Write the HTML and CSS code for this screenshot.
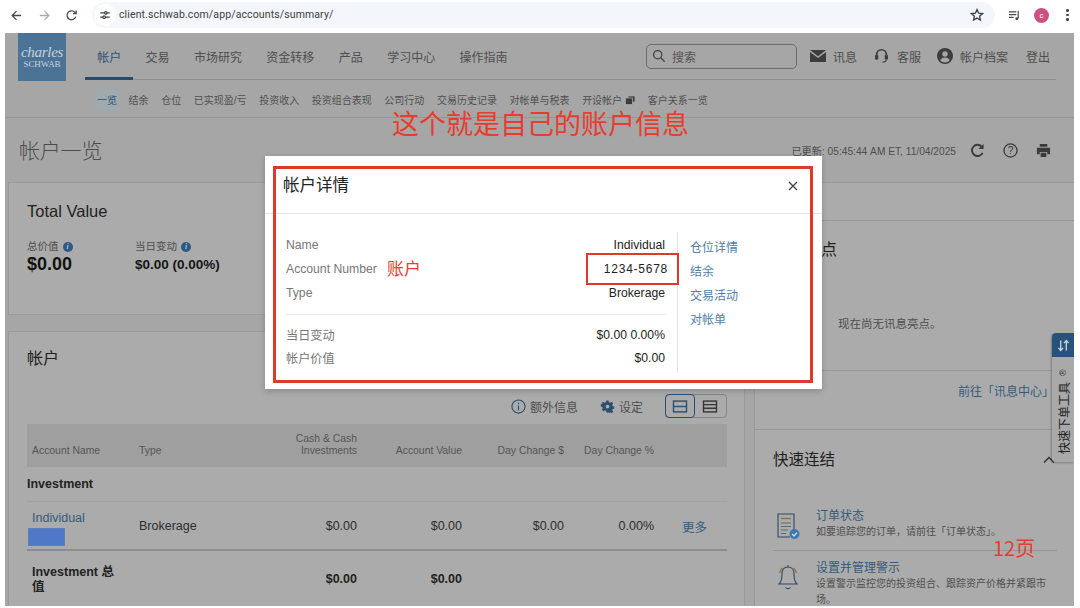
FILE: index.html
```html
<!DOCTYPE html>
<html lang="zh-CN">
<head>
<meta charset="utf-8">
<title>帐户一览</title>
<link rel="stylesheet" href="styles.css">
</head>
<body>
<div class="screen">
  <header class="chrome">
    <svg class="cicon back" viewBox="0 0 14 14"><path d="M12 7H2.5M7 2.3 2.3 7 7 11.7"/></svg>
    <svg class="cicon fwd" viewBox="0 0 14 14"><path d="M2 7h9.5M7 2.3 11.7 7 7 11.7"/></svg>
    <svg class="cicon reload" viewBox="0 0 14 14"><path d="M11.6 8.2A4.8 4.8 0 1 1 10.6 3.6L12 5M12 1.6V5H8.6"/></svg>
    <div class="urlbar">
      <span class="tune"><svg viewBox="0 0 14 14"><path d="M1.5 4.5h5M9.5 4.5h3M1.5 9.5h3M7.5 9.5h5"/><circle cx="8" cy="4.5" r="1.5"/><circle cx="6" cy="9.5" r="1.5"/></svg></span>
      <span class="url">client.schwab.com/app/accounts/summary/</span>
      <svg class="star" viewBox="0 0 14 14"><path d="M7 1.6 8.6 5.2l3.9.4-2.9 2.6.8 3.8L7 10.1 3.6 12l.8-3.8L1.5 5.600l3.900-.4z"/></svg>
    </div>
    <svg class="media" viewBox="0 0 14 14"><path d="M1 3h8M1 6h8M1 9h5"/><path d="M11 2v8"/><circle cx="9.500" cy="10.500" r="1.600" class="fill"/></svg>
    <span class="avatar">c</span>
    <span class="dots"><i></i><i></i><i></i></span>
  </header>

  <div class="app">
    <div class="topnav">
      <div class="logo"><em>charles</em><span>SCHWAB</span></div>
      <div class="navcol">
        <div class="navrow">
          <nav class="tabs">
            <a class="tab active">帐户</a><a class="tab">交易</a><a class="tab">市场研究</a><a class="tab">资金转移</a><a class="tab">产品</a><a class="tab">学习中心</a><a class="tab">操作指南</a>
          </nav>
          <div class="search">
            <svg viewBox="0 0 16 16"><circle cx="6.500" cy="6.500" r="4.700"/><path d="m10 10 4.500 4.500"/></svg>
            <span>搜索</span>
          </div>
          <div class="util">
            <svg class="i-mail" viewBox="0 0 16 12"><path class="fill" d="M0 0h16L8 6.200zM0 2l8 6 8-6v10H0z"/></svg><span>讯息</span>
          </div>
          <div class="util">
            <svg class="i-head" viewBox="0 0 14 16"><path d="M1.800 9V6.500a5.200 5.200 0 0 1 10.400 0V9" class="line"/><rect class="fill" x="0" y="7" width="3.500" height="5" rx="1.200"/><rect class="fill" x="10.500" y="7" width="3.500" height="5" rx="1.200"/><path class="line thin" d="M12 12c0 2-1.500 2.500-4 2.500"/></svg><span>客服</span>
          </div>
          <div class="util">
            <svg class="i-user" viewBox="0 0 16 16"><circle class="fill" cx="8" cy="8" r="8"/><circle class="cut" cx="8" cy="6" r="2.700"/><path class="cut" d="M3.200 12.200c1-2 3-2.700 4.800-2.700s3.800.7 4.800 2.700a6.300 6.300 0 0 1-9.600 0z"/></svg><span>帐户档案</span>
          </div>
          <a class="logout">登出</a>
        </div>
      </div>
    </div>
    <nav class="subnav">
      <a class="sub current">一览</a><a class="sub">结余</a><a class="sub">仓位</a><a class="sub">已实现盈/亏</a><a class="sub">投资收入</a><a class="sub">投资组合表现</a><a class="sub">公司行动</a><a class="sub">交易历史记录</a><a class="sub">对帐单与税表</a>
      <a class="sub open">开设帐户<svg viewBox="0 0 10 10"><rect x="3" y="1" width="7" height="6"/><rect x="0.500" y="3" width="7" height="6.500"/></svg></a>
      <a class="sub">客户关系一览</a>
    </nav>

    <div class="titlerow">
      <h1>帐户一览</h1>
      <span class="updated">已更新: 05:45:44 AM ET, 11/04/2025</span>
      <svg class="act" viewBox="0 0 16 16"><path class="stroke" d="M13.500 10.500A6 6 0 1 1 12.500 3.800"/><path class="fill" d="M14.500 1v5.500H9z"/></svg>
      <svg class="act" viewBox="0 0 16 16"><circle class="stroke thin" cx="8" cy="8" r="7"/><text x="8" y="11.800" text-anchor="middle" class="q">?</text></svg>
      <svg class="act" viewBox="0 0 16 16"><path class="fill" d="M4 1h8v3H4zM1 5h14v7h-3v-2.500H4V12H1zM5 10.500h6V15H5z"/></svg>
    </div>

    <div class="content">
      <main class="leftcol">
        <section class="card total">
          <h2 class="en">Total Value</h2>
          <div class="stats">
            <div class="stat first">
              <div class="lab">总价值<i class="info">i</i></div>
              <div class="big">$0.00</div>
            </div>
            <div class="stat">
              <div class="lab">当日变动<i class="info">i</i></div>
              <div class="mid">$0.00 (0.00%)</div>
            </div>
          </div>
        </section>
        <section class="card accounts">
          <h2>帐户</h2>
          <div class="tools">
            <span class="tool"><svg viewBox="0 0 16 16"><circle cx="8" cy="8" r="7"/><path d="M8 7v5M8 4v1.500"/></svg>额外信息</span>
            <span class="tool"><svg viewBox="0 0 16 16"><path class="gear" d="M6.500 0h3l.4 2.300 1.700.7 2-1.300 2 2.200-1.300 1.900.7 1.700 2 .4v3l-2 .4-.7 1.700 1.300 1.900-2 2.200-2-1.300-1.700.7L9.500 16h-3l-.4-2.300-1.700-.7-2 1.300-2-2.200 1.300-1.900-.7-1.700-2-.4v-3l2-.4.7-1.700L-.1 3.900l2-2.200 2 1.300 1.700-.7zM8 5.500a2.500 2.500 0 1 0 0 5 2.500 2.500 0 0 0 0-5z" transform="translate(1.600 1.600) scale(.8)"/></svg>设定</span>
            <div class="toggle">
              <span class="tg on"><svg viewBox="0 0 14 12"><rect x="1" y="1" width="12" height="10"/><path d="M1 6h12"/></svg></span>
              <span class="tg"><svg viewBox="0 0 14 12"><rect x="1" y="1" width="12" height="10"/><path d="M1 4.300h12M1 7.600h12"/></svg></span>
            </div>
          </div>
          <table class="grid">
            <colgroup><col class="c1"><col class="c2"><col class="c3"><col class="c4"><col class="c5"><col class="c6"><col class="c7"></colgroup>
            <thead>
              <tr><th>Account Name</th><th>Type</th><th class="r">Cash &amp; Cash<br>Investments</th><th class="r">Account Value</th><th class="r">Day Change $</th><th class="r">Day Change %</th><th></th></tr>
            </thead>
            <tbody>
              <tr class="group"><td colspan="7">Investment</td></tr>
              <tr class="acct">
                <td><a class="lnk">Individual</a><span class="redact"></span></td>
                <td>Brokerage</td><td class="r">$0.00</td><td class="r">$0.00</td><td class="r">$0.00</td><td class="r">0.00%</td><td><a class="lnk more">更多</a></td>
              </tr>
              <tr class="sum">
                <td>Investment 总值</td><td></td><td class="r">$0.00</td><td class="r">$0.00</td><td></td><td></td><td></td>
              </tr>
            </tbody>
          </table>
        </section>
      </main>
      <aside class="rightcol">
        <div class="stub"></div>
        <section class="news">
          <h2>讯息亮点</h2>
          <p class="empty">现在尚无讯息亮点。</p>
          <div class="gotolink"><a class="lnk">前往「讯息中心」</a></div>
        </section>
        <section class="quick">
          <div class="qhead"><h2>快速连结</h2><svg viewBox="0 0 12 8"><path d="M1 6.500 6 1.500l5 5"/></svg></div>
          <div class="qitem">
            <svg class="qi" viewBox="0 0 24 28"><path class="b" d="M18 18V2H2v23h12"/><path class="o" d="M5 6.500h10"/><path class="g" d="M5 11h10M5 14.500h10M5 18h7M5 21.500h5"/><circle class="blue" cx="18.500" cy="22" r="5"/><path class="w" d="m16 22 2 2 3-3.500"/></svg>
            <div class="qtext"><a class="lnk">订单状态</a><p>如要追踪您的订单，请前往「订单状态」。</p></div>
          </div>
          <div class="qitem second">
            <svg class="qi" viewBox="0 0 24 28"><path class="b" d="M12 3c-4 0-6 3-6 7 0 5-1 8-3 10h18c-2-2-3-5-3-10 0-4-2-7-6-7zM9.500 23.500c1 1.500 4 1.500 5 0M12 1v2"/><path class="o" d="M3.500 9c.5-2 1.500-3.500 3-5M20.500 9c-.5-2-1.500-3.500-3-5"/></svg>
            <div class="qtext"><a class="lnk">设置并管理警示</a><p>设置警示监控您的投资组合、跟踪资产价格并紧跟市场。</p></div>
          </div>
        </section>
      </aside>
    </div>

    <div class="ticket">
      <div class="thead"><svg viewBox="0 0 14 14"><path d="M4 1.500V12M1.500 9.500 4 12.500l2.500-3M10 12.500V2M7.500 4.500 10 1.500l2.500 3"/></svg></div>
      <div class="tbody"><span>快速下单工具</span><i>®</i></div>
    </div>

    <div class="modal">
      <div class="mhead"><h3>帐户详情</h3><svg viewBox="0 0 10 10"><path d="m1 1 8 8M9 1l-8 8"/></svg></div>
      <div class="mbody">
        <div class="minfo">
          <div class="mrow"><span>Name</span><b>Individual</b></div>
          <div class="mrow"><span>Account Number</span><b class="num">1234-5678</b></div>
          <div class="mrow"><span>Type</span><b>Brokerage</b></div>
          <div class="mrule"></div>
          <div class="mrow"><span>当日变动</span><b>$0.00 0.00%</b></div>
          <div class="mrow"><span>帐户价值</span><b>$0.00</b></div>
        </div>
        <div class="mlinks"><a>仓位详情</a><a>结余</a><a>交易活动</a><a>对帐单</a></div>
      </div>
    </div>
  </div>

  <div class="note note-title">这个就是自己的账户信息</div>
  <div class="frame frame-modal"></div>
  <div class="frame frame-num"></div>
  <div class="note note-acct">账户</div>
  <div class="note note-page">12页</div>
</div>
</body>
</html>
```
FILE: styles.css
```css
* { box-sizing: border-box; }
html, body { margin: 0; padding: 0; }
body { width: 1080px; height: 608px; overflow: hidden; background: #fff; font-family: "Liberation Sans", "Noto Sans CJK SC", sans-serif; color: #1c1c1c; }
a { text-decoration: none; }
h1, h2, h3, p { margin: 0; font-weight: 400; }
.screen { position: relative; width: 1080px; height: 608px; overflow: hidden; }

/* browser bar */
.chrome { height: 33px; display: flex; align-items: center; padding: 0 0 3px 10px; background: #fff; }
.cicon { width: 13px; height: 13px; fill: none; stroke: #474a4f; stroke-width: 1.4; }
.back { margin-right: 15px; }
.fwd { margin-right: 14px; stroke: #a8abb0; }
.reload { margin-right: 14px; }
.urlbar { width: 903px; height: 26px; border-radius: 13px; background: #f3f6fb; display: flex; align-items: center; padding-left: 2px; }
.tune { width: 22px; height: 22px; border-radius: 50%; background: #fff; display: flex; align-items: center; justify-content: center; }
.tune svg { width: 12px; height: 12px; fill: none; stroke: #3c4043; stroke-width: 1.3; }
.url { margin-left: 3px; font: 10.500px/1 "Roboto", "Liberation Sans", sans-serif; color: #3a3d41; letter-spacing: .12px; }
.star { width: 14px; height: 14px; margin-left: auto; margin-right: 11px; fill: none; stroke: #3c4043; stroke-width: 1.300; }
.media { width: 13px; height: 13px; margin-left: 13px; fill: none; stroke: #44474b; stroke-width: 1.300; }
.media .fill { fill: #44474b; stroke: none; }
.avatar { width: 15px; height: 15px; border-radius: 50%; margin-left: 13px; background: #cb5280; color: #fff; font-size: 8px; line-height: 15px; text-align: center; }
.dots { margin-left: 17px; display: flex; flex-direction: column; gap: 2px; }
.dots i { width: 2.500px; height: 2.500px; border-radius: 50%; background: #44474b; }

/* app */
.app { position: relative; margin: 0 6px 2px 5px; height: 573px; background: #a6a6a6; overflow: hidden; color: #202020; }
.topnav { display: flex; height: 47px; padding-left: 13px; }
.logo { width: 48px; height: 48px; background: #4a7396; display: flex; flex-direction: column; align-items: center; justify-content: center; color: #c8d2da; font-family: "Liberation Serif", serif; padding-top: 1px; }
.logo em { font-size: 15px; line-height: 13px; letter-spacing: -.3px; }
.logo span { font-size: 9px; line-height: 10px; letter-spacing: -.1px; }
.navcol { margin-left: 19px; width: 971px; border-bottom: 1px solid #8e8e8e; }
.navrow { height: 46px; display: flex; align-items: center; }
.tabs { display: flex; height: 46px; width: 561px; }
.tab { padding: 0 12.200px; font-size: 12px; line-height: 50px; color: #4e4e4e; position: relative; }
.tab.active { color: #2c5273; }
.tab.active::after { content: ""; position: absolute; left: 0; right: 0; bottom: -1px; height: 3px; background: #274b6b; }
.search { width: 151px; height: 25px; border: 1px solid #6d6d6d; border-radius: 5px; display: flex; align-items: center; padding-left: 5px; font-size: 12px; color: #555; }
.search svg { width: 14px; height: 14px; fill: none; stroke: #444; stroke-width: 1.500; margin-right: 6px; }
.util { display: flex; align-items: center; font-size: 12px; color: #4e4e4e; margin-left: 13px; }
.util svg { margin-right: 7px; }
.util .fill { fill: #3d3d3d; }
.util .cut { fill: #a6a6a6; }
.util .line { fill: none; stroke: #3d3d3d; stroke-width: 1.800; }
.util .thin { stroke-width: 1.200; }
.i-mail { width: 16px; height: 12px; }
.i-head { width: 13px; height: 16px; margin-left: 5px; margin-right: 9px !important; }
.i-user { width: 16px; height: 16px; margin-left: 3px; }
.logout { margin-left: 18px; font-size: 12px; color: #4e4e4e; }

.subnav { height: 38px; display: flex; align-items: center; gap: 12.600px; padding: 2px 0 0 92px; border-bottom: 1px solid #959595; font-size: 10px; color: #505050; }
.sub { white-space: nowrap; }
.current { background: #9fa9ae; color: #2c5273; margin: 0 -3px 0 -2px; padding: 3px 2px; }
.open { display: flex; align-items: center; }
.open svg { width: 10px; height: 10px; margin-left: 3px; fill: #3b3b3b; stroke: #a6a6a6; stroke-width: .8; }

.titlerow { height: 64px; display: flex; align-items: center; padding: 0 23px 0 14px; }
.titlerow h1 { font-size: 21px; color: #4c4c4c; font-weight: 300; margin: 0 auto 2px 0; letter-spacing: -.2px; }
.updated { font-size: 10.200px; color: #4f4f4f; }
.act { width: 15px; height: 15px; margin-left: 18px; }
.updated + .act { margin-left: 14px; }
.act .stroke { fill: none; stroke: #3b3b3b; stroke-width: 2; }
.act .thin { stroke-width: 1.400; }
.act .fill { fill: #3b3b3b; }
.q { font-size: 11px; fill: #3b3b3b; font-family: "Liberation Sans", sans-serif; }

.content { display: flex; padding-left: 3px; height: 424px; }
.leftcol { width: 737px; display: flex; flex-direction: column; gap: 16px; flex: none; }
.card { background: #ababab; border: 1px solid #9b9b9b; padding-left: 18px; }
.total { height: 133px; padding-top: 18px; }
.card h2 { font-size: 16.500px; line-height: 20px; color: #1f1f1f; }
.stats { display: flex; margin-top: 19px; }
.stat.first { width: 108px; }
.lab { font-size: 10.500px; line-height: 13px; color: #4e4e4e; display: flex; align-items: center; }
.info { width: 10px; height: 10px; border-radius: 50%; background: #2d5a82; color: #b5c3cf; font: italic 700 7.500px/10px "Liberation Serif", serif; text-align: center; margin-left: 4px; }
.big { font-size: 18px; line-height: 21px; font-weight: 700; color: #111; margin-top: 1px; }
.mid { font-size: 13.500px; line-height: 21px; font-weight: 700; color: #161616; margin-top: 1px; }

.accounts { flex: 1; padding-top: 17px; padding-right: 17px; border-bottom: 0; }
.accounts h2 { font-size: 16px; }
.tools { display: flex; justify-content: flex-end; align-items: center; height: 24px; margin-top: 25px; color: #4e4e4e; font-size: 12px; }
.tool { display: flex; align-items: center; margin-right: 22px; }
.tool svg { width: 15px; height: 15px; margin-right: 4px; fill: none; stroke: #2b4f6f; stroke-width: 1.200; }
.tool .gear { fill: #2b4f6f; stroke: none; fill-rule: evenodd; }
.toggle { display: flex; width: 62px; height: 24px; border: 1px solid #868686; border-radius: 4px; }
.tg { flex: 1; display: flex; align-items: center; justify-content: center; margin: -1px; }
.tg.on { flex: none; width: 30px; height: 24px; border: 1.500px solid #2b4f6f; border-radius: 4px; }
.tg svg { width: 16px; height: 13px; fill: none; stroke: #373737; stroke-width: 1.300; }
.tg.on svg { stroke: #2b4f6f; }
.grid { width: 700px; table-layout: fixed; border-collapse: collapse; margin-top: 6px; font-size: 12.500px; }
.c1 { width: 107px; } .c2 { width: 110px; } .c3 { width: 113px; } .c4 { width: 105px; } .c5 { width: 102px; } .c6 { width: 90px; } .c7 { width: 73px; }
.grid th { height: 43px; background: #9f9f9f; font-size: 10.400px; line-height: 12px; font-weight: 400; color: #565656; text-align: left; vertical-align: bottom; padding: 0 0 10px 5px; }
.grid th.r, .grid td.r { text-align: right; padding-left: 0; padding-right: 0; }
.grid td { padding: 0 0 0 5px; color: #2d2d2d; vertical-align: middle; }
.group td { height: 34px; padding-left: 0; font-weight: 700; color: #222; border-bottom: 1px solid #a1a1a1; }
.grid .acct td { height: 49px; padding-top: 2px; border-bottom: 2px solid #8d8d8d; }
.grid .acct td:first-child { padding-top: 6px; }
.lnk { color: #355a7c; }
.redact { display: block; width: 37px; height: 18px; margin: 3px 0 0 -4px; background: #4f78c9; border: 1px solid #5a7fb8; }
.more { margin-left: 23px; }
.grid .sum td { height: 56px; padding-top: 2px; font-weight: 700; color: #222; line-height: 15px; }
.grid .sum td:first-child { padding-right: 10px; }

.rightcol { margin-left: 9px; flex: 1; display: flex; flex-direction: column; background: #ababab; border-left: 1px solid #9b9b9b; border-top: 1px solid #9b9b9b; }
.stub { height: 38px; border-bottom: 1px solid #979797; flex: none; }
.news { height: 209px; border-bottom: 1px solid #979797; display: flex; flex-direction: column; padding-left: 18px; flex: none; }
.news h2 { font-size: 16px; line-height: 20px; margin-top: 19px; }
.empty { font-size: 11.500px; line-height: 14px; color: #4e4e4e; margin-top: 57px; padding-left: 65px; }
.gotolink { margin-top: 39px; padding-top: 14px; padding-right: 20px; margin-left: -18px; border-top: 1px solid #979797; text-align: right; font-size: 12px; line-height: 14px; }
.quick { flex: 1; padding: 20px 17px 0 18px; }
.qhead { display: flex; align-items: center; justify-content: space-between; padding-right: 1px; }
.qhead h2 { font-size: 15.500px; line-height: 20px; }
.qhead svg { width: 12px; height: 8px; fill: none; stroke: #333; stroke-width: 1.500; margin-right: 1px; }
.qitem { display: flex; margin-top: 39px; padding-bottom: 10px; border-bottom: 1px solid #979797; }
.qitem.second { margin-top: 10px; padding-bottom: 0; border: 0; }
.qi { width: 24px; height: 28px; margin: 3px 16px 0 3px; flex: none; fill: none; stroke-width: 1.100; }
.qi .b { stroke: #2e4a66; }
.qi .o { stroke: #94713a; stroke-width: 1.400; }
.qi .g { stroke: #5f6a73; }
.qi .blue { fill: #3b79b4; stroke: none; }
.qi .w { stroke: #cfd9e2; stroke-width: 1.200; }
.qtext .lnk { font-size: 12px; line-height: 15px; display: block; }
.qtext p { font-size: 10px; line-height: 15.500px; color: #4f4f4f; padding-right: 8px; }

.ticket { position: absolute; right: 0; top: 300px; width: 22px; height: 129px; box-shadow: -1px 1px 2px rgba(0,0,0,.25); background: #a9a9a9; border-radius: 4px 0 0 4px; }
.thead { height: 24px; background: #28527a; border-radius: 4px 0 0 0; display: flex; align-items: center; justify-content: center; }
.thead svg { width: 13px; height: 13px; fill: none; stroke: #ccd6df; stroke-width: 1.400; }
.tbody { writing-mode: vertical-rl; text-orientation: sideways; transform: rotate(180deg); width: 22px; height: 105px; display: flex; align-items: center; font-size: 12px; color: #222; padding-top: 8px; }
.tbody i { font-style: normal; font-size: 9px; margin-top: 6px; color: #333; }

/* modal */
.modal { position: absolute; left: 259.500px; top: 123px; width: 557.500px; height: 233px; background: #fff; box-shadow: 0 2px 6px rgba(0,0,0,.2); color: #222; }
.mhead { height: 58px; border-bottom: 1px solid #e2e4e6; display: flex; justify-content: space-between; padding: 19px 24px 0 18.500px; }
.mhead h3 { font-size: 16.500px; line-height: 20px; color: #222; }
.mhead svg { width: 10px; height: 10px; margin-top: 6px; fill: none; stroke: #444; stroke-width: 1.400; }
.mbody { display: flex; padding: 18px 0 0 21.500px; }
.minfo { width: 392px; border-right: 1px solid #e2e4e6; padding: 1px 12px 5px 0; height: 141px; }
.mrow { display: flex; justify-content: space-between; height: 24px; align-items: center; font-size: 12.200px; color: #777; }
.mrow b { font-weight: 400; font-size: 12.200px; color: #222; }
.mrow .num { font-size: 12px; letter-spacing: .75px; margin-right: -3px; color: #222; }
.mrule { height: 1px; background: #e6e7e8; margin: 8.500px 0 9px; }
.mrow:nth-child(n+5) { height: 23px; }
.mlinks { display: flex; flex-direction: column; padding: 4px 0 0 12px; font-size: 12px; }
.mlinks a { height: 24px; line-height: 24px; color: #4f81a8; }

/* red annotations */
.note { position: absolute; color: #e83d2e; font-family: "Noto Sans CJK SC", sans-serif; white-space: nowrap; }
.note-title { left: 392px; top: 109px; font-size: 27px; line-height: 28px; }
.note-acct { left: 387px; top: 256px; font-size: 17px; line-height: 24px; }
.note-page { left: 993px; top: 536px; font-size: 20px; line-height: 24px; }
.frame { position: absolute; border: 2px solid #e0392b; }
.frame-modal { left: 273px; top: 166px; width: 540px; height: 217px; border-width: 3px; }
.frame-num { left: 586px; top: 253px; width: 93px; height: 32px; }
```
